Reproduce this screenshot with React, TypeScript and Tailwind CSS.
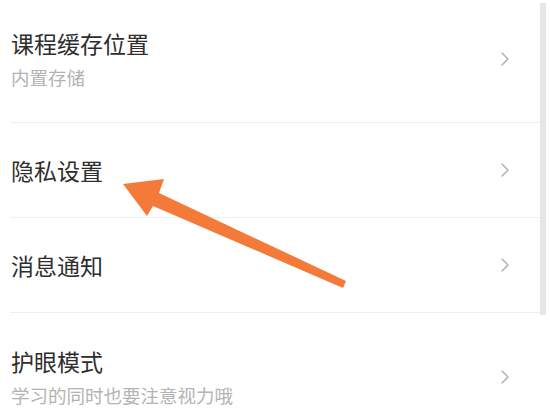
import React from "react";

type Item = { title: string; sub?: string };

const items: Item[] = [
  { title: "课程缓存位置", sub: "内置存储" },
  { title: "隐私设置" },
  { title: "消息通知" },
  { title: "护眼模式", sub: "学习的同时也要注意视力哦" },
];

function Chevron() {
  return (
    <svg width="10" height="16" viewBox="0 0 10 16" fill="none">
      <polyline points="2,2 8,8 2,14" stroke="#b4b4b4" strokeWidth="1.6" strokeLinecap="round" strokeLinejoin="round" />
    </svg>
  );
}

function Row({ title, sub }: Item) {
  return (
    <div
      className={`flex items-center justify-between border-b border-[#efefef] pl-px pr-[30px] ${
        sub ? "h-[128px]" : "h-[95px]"
      }`}
    >
      <div className="flex flex-col">
        <span className="text-[23px] leading-[30px] text-[#2e2e2e]">{title}</span>
        {sub && <span className="mt-[7px] text-[18.5px] leading-[24px] text-[#b3b3b3]">{sub}</span>}
      </div>
      <Chevron />
    </div>
  );
}

export default function App() {
  return (
    <div
      className="relative h-[409px] w-[550px] overflow-hidden bg-white"
      style={{ fontFamily: '"Noto Sans CJK SC", "Noto Sans", sans-serif' }}
    >
      <div className="-mt-[5px] ml-[10px] w-[530px]">
        {items.map((it) => (
          <Row key={it.title} {...it} />
        ))}
      </div>

      {/* scrollbar */}
      <div className="absolute left-[540px] top-[3px] h-[312px] w-[6px] bg-[#e6e6e6]" />

      {/* annotation arrow */}
      <svg className="absolute left-0 top-0" width="550" height="409" viewBox="0 0 550 409">
        <polygon
          points="123,184 164,179 159,193 346,281 343,288 153,206 147,216"
          fill="#f47a3a"
        />
      </svg>
    </div>
  );
}
